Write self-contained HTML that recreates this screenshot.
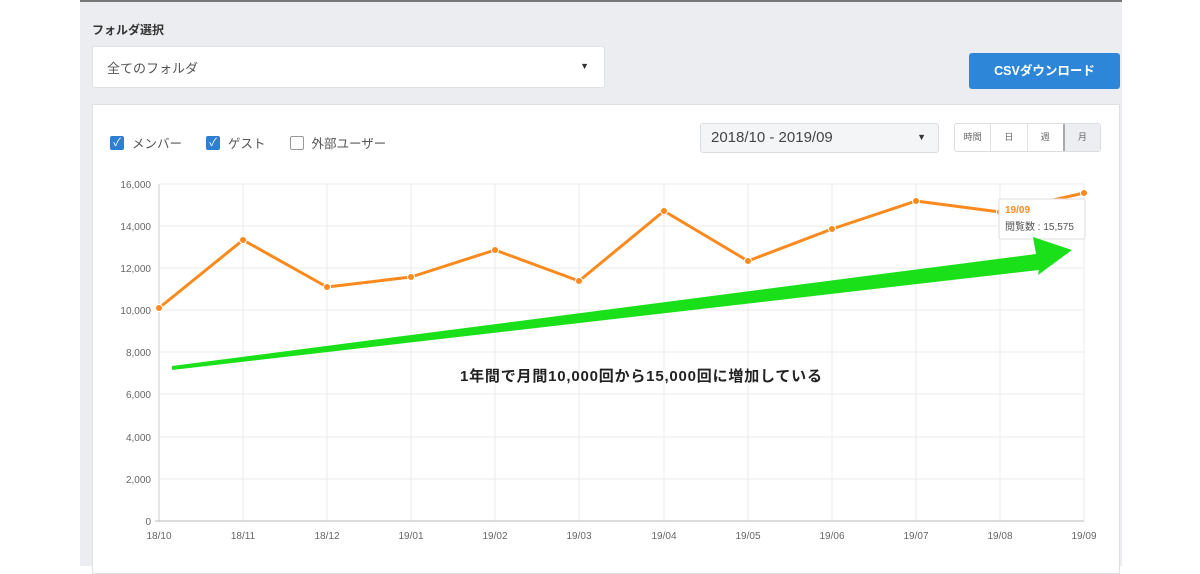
<!DOCTYPE html>
<html><head><meta charset="utf-8"><style>
*{margin:0;padding:0;box-sizing:border-box}
body{width:1200px;height:566px;background:#fff;position:relative;overflow:hidden;font-family:"Liberation Sans","Noto Sans CJK JP",sans-serif;}
.bg{position:absolute;left:80px;top:0;width:1042px;height:566px;background:#ecedf0;border-top:2px solid #777;}
.abs{position:absolute}
</style></head><body>
<div class="bg"></div>
<div class="abs" style="left:92px;top:21px;font-size:12px;font-weight:bold;color:#333">フォルダ選択</div>
<div class="abs" style="left:92px;top:46px;width:513px;height:42px;background:#fff;border:1px solid #e0e1e4;border-radius:3px;font-size:13px;color:#555;padding:11px 14px">全てのフォルダ<span style="position:absolute;right:15px;top:14px;font-size:9px;color:#333">▼</span></div>
<div class="abs" style="left:969px;top:53px;width:151px;height:36px;background:#2e86d9;border-radius:3px;color:#fff;font-size:12.5px;font-weight:bold;text-align:center;line-height:36px">CSVダウンロード</div>
<div class="abs" style="left:92px;top:104px;width:1028px;height:470px;background:#fff;border:1px solid #dfe0e3"></div>
<div class="abs" style="left:110px;top:133px;font-size:12.5px;color:#555;display:flex;align-items:center;gap:0">
<span style="width:14px;height:14px;background:#2e7fd2;border-radius:2px;color:#fff;font-size:11px;line-height:14px;text-align:center">✓</span><span style="margin:0 24px 0 8px">メンバー</span>
<span style="width:14px;height:14px;background:#2e7fd2;border-radius:2px;color:#fff;font-size:11px;line-height:14px;text-align:center">✓</span><span style="margin:0 24px 0 8px">ゲスト</span>
<span style="width:14px;height:14px;border:1px solid #999;border-radius:2px"></span><span style="margin:0 0 0 8px">外部ユーザー</span></div>
<div class="abs" style="left:700px;top:123px;width:239px;height:30px;background:#f4f5f7;border:1px solid #dcdde0;border-radius:3px;font-size:15px;color:#444;padding:5px 10px">2018/10 - 2019/09<span style="position:absolute;right:12px;top:8px;font-size:9px;color:#333">▼</span></div>
<div class="abs" style="left:954px;top:123px;width:147px;height:29px;border:1px solid #dcdde0;border-radius:3px;display:flex;font-size:9px;color:#666;background:#fff">
<div style="flex:1;text-align:center;line-height:27px;border-right:1px solid #e3e3e3">時間</div><div style="flex:1;text-align:center;line-height:27px;border-right:1px solid #e3e3e3">日</div><div style="flex:1;text-align:center;line-height:27px">週</div><div style="flex:1;text-align:center;line-height:27px;background:#eceef2;border-left:2px solid #aaa">月</div></div>
<svg class="abs" style="left:0;top:0" width="1200" height="566" font-family="Liberation Sans, sans-serif">
<g stroke="#ebebeb" stroke-width="1">
<line x1="159" y1="184" x2="1084" y2="184"/><line x1="159" y1="226" x2="1084" y2="226"/><line x1="159" y1="268" x2="1084" y2="268"/><line x1="159" y1="310" x2="1084" y2="310"/><line x1="159" y1="352" x2="1084" y2="352"/><line x1="159" y1="394" x2="1084" y2="394"/><line x1="159" y1="437" x2="1084" y2="437"/><line x1="159" y1="479" x2="1084" y2="479"/>
<line x1="243" y1="184" x2="243" y2="521"/><line x1="327" y1="184" x2="327" y2="521"/><line x1="411" y1="184" x2="411" y2="521"/><line x1="495" y1="184" x2="495" y2="521"/><line x1="579" y1="184" x2="579" y2="521"/><line x1="664" y1="184" x2="664" y2="521"/><line x1="748" y1="184" x2="748" y2="521"/><line x1="832" y1="184" x2="832" y2="521"/><line x1="916" y1="184" x2="916" y2="521"/><line x1="1000" y1="184" x2="1000" y2="521"/><line x1="1084" y1="184" x2="1084" y2="521"/>
</g>
<line x1="159" y1="184" x2="159" y2="521" stroke="#ccc"/><line x1="155" y1="521" x2="1084" y2="521" stroke="#bbb"/>
<g font-size="10" fill="#666" text-anchor="end">
<text x="151" y="188">16,000</text><text x="151" y="230">14,000</text><text x="151" y="272">12,000</text><text x="151" y="314">10,000</text><text x="151" y="356">8,000</text><text x="151" y="398">6,000</text><text x="151" y="441">4,000</text><text x="151" y="483">2,000</text><text x="151" y="525">0</text></g>
<g font-size="10" fill="#666" text-anchor="middle">
<text x="159" y="539">18/10</text><text x="243" y="539">18/11</text><text x="327" y="539">18/12</text><text x="411" y="539">19/01</text><text x="495" y="539">19/02</text><text x="579" y="539">19/03</text><text x="664" y="539">19/04</text><text x="748" y="539">19/05</text><text x="832" y="539">19/06</text><text x="916" y="539">19/07</text><text x="1000" y="539">19/08</text><text x="1084" y="539">19/09</text></g>
<polyline fill="none" stroke="#fb8a1e" stroke-width="3" stroke-linejoin="round" points="159,308 243,240 327,287 411,277 495,250 579,281 664,211 748,261 832,229 916,201 1000,212 1084,193"/>
<g fill="#fb8a1e" stroke="#fff" stroke-width="1"><circle cx="159" cy="308" r="3.5"/><circle cx="243" cy="240" r="3.5"/><circle cx="327" cy="287" r="3.5"/><circle cx="411" cy="277" r="3.5"/><circle cx="495" cy="250" r="3.5"/><circle cx="579" cy="281" r="3.5"/><circle cx="664" cy="211" r="3.5"/><circle cx="748" cy="261" r="3.5"/><circle cx="832" cy="229" r="3.5"/><circle cx="916" cy="201" r="3.5"/><circle cx="1000" cy="212" r="3.5"/><circle cx="1084" cy="193" r="3.5"/></g>
<rect x="999" y="199" width="86" height="40" fill="#fff" stroke="#ddd" rx="2"/>
<text x="1005" y="213" font-size="10" fill="#fb8a1e" font-weight="bold">19/09</text>
<text x="1005" y="230" font-size="10" fill="#555" font-family="Liberation Sans, Noto Sans CJK JP, sans-serif">閲覧数 : 15,575</text>
<polygon fill="#1ae01a" points="172,366 1036,254 1033,237 1072,250 1038,275 1039,270 172,370"/>
<text x="460" y="381" font-size="15" font-weight="bold" fill="#222" font-family="Liberation Sans, Noto Sans CJK JP, sans-serif" textLength="362">1年間で月間10,000回から15,000回に増加している</text>
</svg>
</body></html>
